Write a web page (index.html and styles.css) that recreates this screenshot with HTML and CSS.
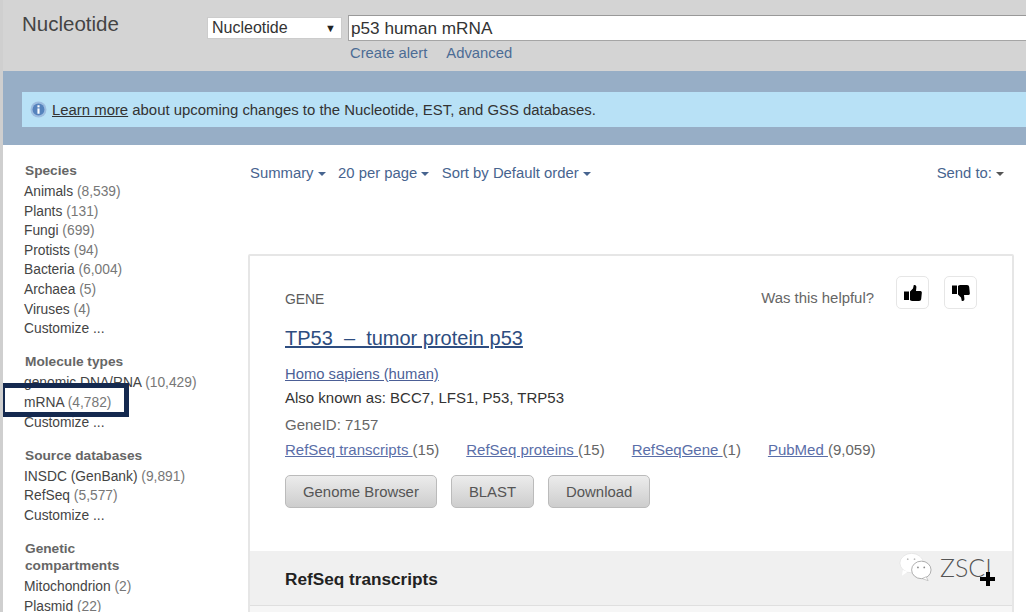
FILE: index.html
```html
<!DOCTYPE html>
<html lang="en">
<head>
<meta charset="utf-8">
<title>Nucleotide search</title>
<link rel="stylesheet" href="styles.css">
</head>
<body>
<div class="page">
  <header class="search-bar">
    <div class="db-name">Nucleotide</div>
    <div class="search-col">
      <div class="search-row">
        <div class="db-select"><span>Nucleotide</span><span class="select-arrow">▼</span></div>
        <div class="term-input">p53 human mRNA</div>
      </div>
      <div class="search-links"><a>Create alert</a><a>Advanced</a></div>
    </div>
  </header>
  <section class="band">
    <div class="notice">
      <svg class="info-icon" viewBox="0 0 16 16"><circle cx="8" cy="8" r="7.5" fill="#9dbde0"/><circle cx="8" cy="8" r="5.600" fill="#5583bd"/><rect x="7" y="7" width="2" height="5" fill="#fff"/><rect x="7" y="4" width="2" height="2" fill="#fff"/></svg>
      <span><a class="learn">Learn more</a> about upcoming changes to the Nucleotide, EST, and GSS databases.</span>
    </div>
  </section>
  <div class="main">
    <aside class="filters">
      <div class="group">
        <h3>Species</h3>
        <ul>
          <li>Animals <span>(8,539)</span></li>
          <li>Plants <span>(131)</span></li>
          <li>Fungi <span>(699)</span></li>
          <li>Protists <span>(94)</span></li>
          <li>Bacteria <span>(6,004)</span></li>
          <li>Archaea <span>(5)</span></li>
          <li>Viruses <span>(4)</span></li>
          <li>Customize ...</li>
        </ul>
      </div>
      <div class="group">
        <h3>Molecule types</h3>
        <ul>
          <li>genomic DNA/RNA <span>(10,429)</span></li>
          <li>mRNA <span>(4,782)</span></li>
          <li>Customize ...</li>
        </ul>
      </div>
      <div class="group">
        <h3>Source databases</h3>
        <ul>
          <li>INSDC (GenBank) <span>(9,891)</span></li>
          <li>RefSeq <span>(5,577)</span></li>
          <li>Customize ...</li>
        </ul>
      </div>
      <div class="group">
        <h3>Genetic<br>compartments</h3>
        <ul>
          <li>Mitochondrion <span>(2)</span></li>
          <li>Plasmid <span>(22)</span></li>
        </ul>
      </div>
    </aside>
    <main class="results">
      <div class="toolbar">
        <div class="tools-left">
          <a>Summary<i class="caret"></i></a>
          <a>20 per page<i class="caret"></i></a>
          <a>Sort by Default order<i class="caret"></i></a>
        </div>
        <a class="send">Send to:<i class="caret dark"></i></a>
      </div>
      <article class="card">
        <div class="card-body">
          <div class="card-top">
            <span class="kind">GENE</span>
            <div class="helpful">
              <span class="helpful-label">Was this helpful?</span>
              <button class="thumb" aria-label="Yes"><svg viewBox="0 0 18 18"><path d="M0 7.500h5V16H0zM6 7.500l3-3 .8-3.500c2-.5 3 1 2.500 3L12 7h4.500c1 0 1.500 1 1.300 2l-.6 6c-.2 1.200-.8 2-2.200 2H8c-1 0-2-1-2-1z"/></svg></button>
              <button class="thumb" aria-label="No"><svg viewBox="0 0 18 18"><path d="M0 1.500h5V10H0zM6 10.500l3 3 .8 3.500c2 .5 3-1 2.500-3L12 11h4.500c1 0 1.500-1 1.300-2l-.6-6c-.2-1.200-.8-2-2.200-2H8C7 1 6 2 6 2z"/></svg></button>
            </div>
          </div>
          <h2 class="gene-title"><a>TP53 &nbsp;–&nbsp; tumor protein p53</a></h2>
          <div class="organism"><a>Homo sapiens (human)</a></div>
          <div class="aka">Also known as: BCC7, LFS1, P53, TRP53</div>
          <div class="gene-id">GeneID: 7157</div>
          <div class="counts">
            <span><a>RefSeq transcripts </a>(15)</span>
            <span><a>RefSeq proteins </a>(15)</span>
            <span><a>RefSeqGene </a>(1)</span>
            <span><a>PubMed </a>(9,059)</span>
          </div>
          <div class="actions">
            <button class="btn">Genome Browser</button>
            <button class="btn">BLAST</button>
            <button class="btn">Download</button>
          </div>
        </div>
        <div class="card-section">
          <h4>RefSeq transcripts</h4>
          <div class="watermark">
            <svg class="wechat" viewBox="0 0 36 30"><ellipse cx="14" cy="11" rx="12" ry="10" fill="#fff" stroke="#ddd" stroke-width=".6"/><path d="M5 18l-1 6 6-4z" fill="#fff"/><ellipse cx="24" cy="18" rx="10" ry="9" fill="#fff" stroke="#999" stroke-width=".8"/><path d="M29 25l2 4-6-2z" fill="#fff" stroke="#999" stroke-width=".5"/><circle cx="20.500" cy="15.500" r=".9" fill="#888"/><circle cx="27" cy="15.500" r=".9" fill="#888"/><circle cx="10" cy="7" r=".9" fill="#bbb"/><circle cx="17" cy="7" r=".9" fill="#bbb"/></svg>
            <span class="wm-text">ZSCI</span>
            <span class="cross"></span>
          </div>
        </div>
        <div class="card-next"></div>
      </article>
    </main>
  </div>
  <div class="highlight"></div>
</div>
</body>
</html>
```
FILE: styles.css
```css
* { box-sizing: border-box; }
html, body { margin: 0; height: 100%; overflow: hidden; background: #fff; }
body { font-family: "Liberation Sans", Arial, sans-serif; color: #444; }
a { color: inherit; }
h2, h3, h4, ul { margin: 0; padding: 0; }
ul { list-style: none; }
.page { position: relative; height: 612px; overflow: hidden; border-left: 3px solid #cfcfcf; }

.search-bar { display: flex; height: 71px; background: #d4d4d4; padding: 15px 0 0 19px; }
.db-name { width: 185px; margin-top: -1px; font-size: 20.500px; line-height: 20px; color: #444; }
.search-col { flex: 1; min-width: 0; }
.search-row { display: flex; height: 26px; }
.db-select { width: 135px; height: 22px; margin-top: 2px; background: #fff; border: 1px solid #ccc; display: flex; justify-content: space-between; align-items: center; padding: 0 5px 0 4px; font-size: 16px; color: #333; }
.select-arrow { font-size: 11px; color: #222; }
.term-input { flex: 1; margin-left: 6px; height: 26px; background: #fff; border: 1px solid #a5a5a5; border-top-color: #999; border-right: 0; padding-left: 2px; font-size: 17.200px; line-height: 25px; color: #333; }
.search-links { margin: 4px 0 0 143px; display: flex; gap: 19px; font-size: 14.800px; line-height: 17px; color: #4c6c94; }

.band { height: 74px; background: #97aec6; padding: 21px 0 0 19px; }
.notice { height: 35px; background: #b8e1f6; padding-left: 8px; display: flex; align-items: center; font-size: 14.900px; color: #333; white-space: nowrap; }
.info-icon { width: 17px; height: 17px; margin-right: 5px; flex: none; }
.learn { text-decoration: underline; }

.main { display: flex; }
.filters { width: 245px; flex: none; padding: 17px 0 0 21px; font-size: 13.800px; }
.group { margin-bottom: 14.600px; }
.group h3 { font-size: 13.700px; line-height: 17px; margin-bottom: 3px; font-weight: bold; color: #666; padding-left: 1px; }
.group li { line-height: 19.600px; white-space: nowrap; color: #444; }
.group li span { color: #777; }

.results { flex: 1; min-width: 0; padding: 18px 0 0 0; }
.toolbar { display: flex; justify-content: space-between; padding: 0 22px 0 2px; font-size: 14.850px; line-height: 20px; color: #47648f; }
.tools-left { display: flex; gap: 12.500px; }
.caret { display: inline-block; width: 0; height: 0; margin-left: 4px; vertical-align: 2px; border: 4.500px solid transparent; border-bottom: 0; border-top-color: #47648f; }
.caret.dark { border-top-color: #555; }

.card { margin: 71px 12px 0 0; border: 2px solid #e6e6e6; border-radius: 2px; }
.card-body { padding: 20px 35px 0 35px; height: 295px; }
.card-top { display: flex; justify-content: space-between; align-items: flex-start; height: 33px; }
.kind { margin-top: 15px; font-size: 13.900px; line-height: 16px; color: #5c5c5c; }
.helpful { display: flex; align-items: flex-start; font-size: 14.900px; color: #666; }
.helpful-label { margin: 13px 22px 0 0; line-height: 18px; }
.thumb { width: 33px; height: 33px; margin-right: 15px; padding: 0; background: #fff; border: 1px solid #e6e6e6; border-radius: 5px; display: flex; align-items: center; justify-content: center; }
.thumb:last-child { margin-right: 0; }
.thumb svg { width: 18px; height: 18px; fill: #000; }
.gene-title { margin-top: 16px; font-size: 20px; line-height: 26px; font-weight: normal; color: #2e4d80; }
.gene-title a, .organism a, .counts a { text-decoration: underline; }
.organism { margin-top: 11px; font-size: 14.800px; line-height: 24px; color: #4c5f96; }
.aka { font-size: 15px; line-height: 24px; color: #333; }
.gene-id { margin-top: 3px; font-size: 15px; line-height: 24px; color: #666; }
.counts { display: flex; gap: 27px; font-size: 15px; line-height: 24px; color: #666; margin-top: 1px; }
.counts a { color: #5a6ea8; }
.actions { display: flex; gap: 14px; margin-top: 13px; }
.btn { height: 33px; padding: 0 17px; font: 14.900px "Liberation Sans", Arial, sans-serif; color: #555; background: linear-gradient(#ececec, #cdcdcd); border: 1px solid #bbb; border-radius: 5px; }

.card-section { position: relative; height: 55px; background: #f0f0f0; border-bottom: 1px solid #dfdfdf; padding-left: 35px; }
.card-section h4 { font-size: 17.200px; line-height: 56px; color: #222; }
.card-next { height: 20px; background: #f6f6f6; }
.watermark { position: absolute; left: 648px; top: 1px; display: flex; align-items: center; gap: 7px; color: #555; }
.wechat { width: 35px; height: 30px; }
.wm-text { font-family: Lato, "Liberation Sans", sans-serif; font-size: 25px; font-weight: 300; line-height: 30px; color: #555; text-shadow: 0 0 1px #fff; }
.cross { position: absolute; left: 82px; top: 20px; width: 15px; height: 14px; background: linear-gradient(#000,#000) center/15px 4px no-repeat, linear-gradient(#000,#000) center/4px 14px no-repeat; }

.highlight { position: absolute; left: -3px; top: 383px; width: 129px; height: 34px; border: 5px solid #14294f; }
```
